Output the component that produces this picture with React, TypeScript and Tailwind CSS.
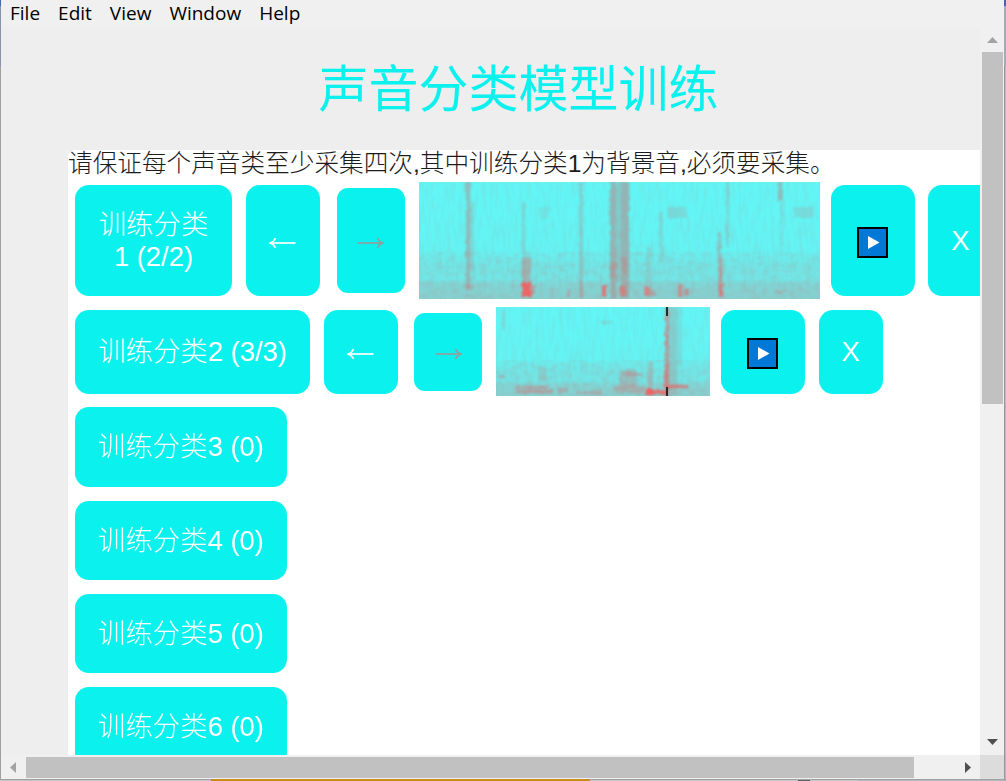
import type { ReactNode } from "react";

type Streak = [x: number, y: number, w: number, h: number, color: string, opacity: number];

const menuItems = ["File", "Edit", "View", "Window", "Help"];

const firstStreaks: Streak[] = [
  [47, 0, 4, 105, "#a79a9a", 0.6],
  [50, 20, 5, 70, "#a79a9a", 0.25],
  [103, 20, 3, 90, "#a79a9a", 0.35],
  [103, 76, 9, 30, "#c08686", 0.5],
  [160, 0, 4, 117, "#a79a9a", 0.4],
  [191, 0, 6, 117, "#a79a9a", 0.7],
  [197, 0, 5, 100, "#a79a9a", 0.45],
  [202, 0, 8, 117, "#a79a9a", 0.7],
  [192, 80, 5, 15, "#c08686", 0.5],
  [203, 75, 5, 17, "#c08686", 0.5],
  [227, 65, 5, 50, "#a79a9a", 0.25],
  [240, 30, 4, 50, "#a79a9a", 0.3],
  [248, 25, 20, 11, "#a79a9a", 0.28],
  [120, 25, 10, 12, "#a79a9a", 0.18],
  [299, 50, 3, 65, "#b09090", 0.5],
  [300, 76, 4, 40, "#d07878", 0.45],
  [307, 0, 3, 65, "#a79a9a", 0.3],
  [359, 0, 5, 19, "#a79a9a", 0.6],
  [361, 19, 3, 45, "#a79a9a", 0.2],
  [375, 25, 19, 11, "#a79a9a", 0.28],
  [103, 101, 9, 14, "#f06060", 0.95],
  [111, 103, 5, 10, "#e07070", 0.55],
  [48, 103, 6, 5, "#d07878", 0.4],
  [148, 108, 3, 8, "#d07878", 0.4],
  [161, 98, 3, 18, "#d07878", 0.4],
  [183, 104, 5, 10, "#f06060", 0.8],
  [200, 104, 7, 10, "#e07070", 0.65],
  [225, 105, 6, 9, "#e87070", 0.7],
  [231, 108, 5, 6, "#d07878", 0.5],
  [259, 103, 5, 12, "#e07070", 0.65],
  [265, 106, 5, 8, "#d07878", 0.6],
  [300, 102, 4, 12, "#f06060", 0.5],
  [355, 108, 10, 3, "#d07878", 0.3],
];

const secondStreaks: Streak[] = [
  [169, 0, 4, 89, "#c08686", 0.7],
  [173, 0, 8, 89, "#a79a9a", 0.4],
  [181, 0, 5, 60, "#a79a9a", 0.2],
  [6, 3, 3, 20, "#a79a9a", 0.25],
  [105, 14, 12, 3, "#a79a9a", 0.3],
  [42, 60, 8, 14, "#c08686", 0.25],
  [2, 68, 7, 3, "#d07878", 0.4],
  [123, 63, 17, 17, "#c08686", 0.4],
  [127, 66, 20, 3, "#d07878", 0.4],
  [152, 54, 5, 35, "#c08686", 0.4],
  [169, 28, 3, 10, "#f06060", 0.4],
  [168, 57, 4, 24, "#f06060", 0.4],
  [20, 79, 32, 3, "#d07878", 0.5],
  [22, 83, 35, 3, "#d07878", 0.5],
  [62, 80, 10, 5, "#d07878", 0.35],
  [80, 84, 27, 3, "#d07878", 0.35],
  [119, 79, 30, 7, "#d07878", 0.35],
  [150, 81, 7, 7, "#f06060", 0.95],
  [157, 83, 14, 5, "#f06060", 0.8],
  [171, 78, 22, 3, "#f06060", 0.7],
];

function Spectrogram({ id, width, height, streaks, marker, className }: {
  id: string;
  width: number;
  height: number;
  streaks: Streak[];
  marker?: number;
  className: string;
}) {
  return (
    <svg className={`block shrink-0 ${className}`} width={width} height={height} viewBox={`0 0 ${width} ${height}`}>
      <defs>
        <linearGradient id={`${id}-base`} x1="0" y1="0" x2="0" y2="1">
          <stop offset="0" stopColor="#62f6f6" />
          <stop offset="0.57" stopColor="#65f3f3" />
          <stop offset="0.72" stopColor="#71e6e6" />
          <stop offset="0.83" stopColor="#71e7e7" />
          <stop offset="0.87" stopColor="#7fd7d7" />
          <stop offset="1" stopColor="#87d0d0" />
        </linearGradient>
        <filter id={`${id}-columns`} x="0" y="0" width="1" height="1" colorInterpolationFilters="sRGB">
          <feTurbulence type="fractalNoise" baseFrequency="0.25 0.05" numOctaves="3" seed="7" />
          <feColorMatrix values="0 0 0 0 .62  0 0 0 0 .65  0 0 0 0 .65  0.9 0 0 0 -.36" />
        </filter>
        <filter id={`${id}-grain`} x="0" y="0" width="1" height="1" colorInterpolationFilters="sRGB">
          <feTurbulence type="fractalNoise" baseFrequency="0.13 0.16" numOctaves="2" seed="12" />
          <feColorMatrix values="0 0 0 0 .72  0 0 0 0 .55  0 0 0 0 .55  1 0 0 0 -.4" />
        </filter>
        <filter id={`${id}-soft`} x="-0.05" y="-0.05" width="1.1" height="1.1" colorInterpolationFilters="sRGB">
          <feTurbulence type="fractalNoise" baseFrequency="0.2" numOctaves="2" seed="4" result="n" />
          <feDisplacementMap in="SourceGraphic" in2="n" scale="4" xChannelSelector="R" yChannelSelector="G" result="d" />
          <feGaussianBlur in="d" stdDeviation="1 1.2" />
        </filter>
      </defs>
      <rect width={width} height={height} fill={`url(#${id}-base)`} />
      <rect width={width} height={height} filter={`url(#${id}-columns)`} opacity="0.4" />
      <rect y={height * 0.6} width={width} height={height * 0.4} filter={`url(#${id}-grain)`} opacity="0.4" />
      <g filter={`url(#${id}-soft)`}>
        {streaks.map(([x, y, w, h, color, opacity], i) => (
          <rect key={i} x={x} y={y} width={w} height={h} fill={color} opacity={opacity} />
        ))}
      </g>
      {marker !== undefined && (
        <path d={`M${marker} 0v9M${marker} ${height - 9}v9`} stroke="#20292b" strokeWidth="2" />
      )}
    </svg>
  );
}

function Tile({ className, children }: { className: string; children: ReactNode }) {
  return (
    <button className={`flex shrink-0 items-center justify-center bg-[#0af1ee] text-white ${className}`}>
      {children}
    </button>
  );
}

function Arrow({ left, className }: { left?: boolean; className: string }) {
  return (
    <svg className={className} width="27" height="12" viewBox="0 0 27 12" fill="none" stroke="currentColor">
      <g transform={left ? undefined : "translate(27 0) scale(-1 1)"}>
        <path d="M2 6H26.5" strokeWidth="1.7" />
        <path d="M6.5 1Q5 4.8 1 6Q5 7.2 6.5 11" strokeWidth="1.6" />
      </g>
    </svg>
  );
}

function PlayIcon({ className }: { className: string }) {
  return (
    <svg className={className} width="31" height="31" viewBox="0 0 31 31">
      <rect x="1" y="1" width="29" height="29" fill="#0078d7" stroke="#000" strokeWidth="2" />
      <path d="M11 9V22L22.5 15.5Z" fill="#fff" />
    </svg>
  );
}

export default function App() {
  return (
    <div className="flex h-[781px] w-[1006px] flex-col overflow-hidden bg-[#c4c4c4] font-['Liberation_Sans','Noto_Sans_CJK_SC',sans-serif]">
      <div className="flex h-[779px] shrink-0">
        <div className="flex w-px flex-col">
          <div className="h-1.5 bg-[#3c69b0]" />
          <div className="h-[60px] bg-[#8793aa]" />
          <div className="flex-1 bg-[#a0a0a0]" />
        </div>
        <div className="flex w-[1003px] shrink-0 flex-col">
          <nav className="flex h-[27px] shrink-0 items-center gap-[18px] bg-[#f0f0f0] pl-[9px] font-['Open_Sans','Noto_Sans',sans-serif] text-[19px] leading-[27px] text-black">
            {menuItems.map((item) => <span key={item}>{item}</span>)}
          </nav>
          <div className="flex h-[728px] shrink-0">
            <main className="flex w-[979px] flex-col overflow-hidden bg-[#eeeeee]">
              <h1 className="h-[123px] w-[1035px] shrink-0 pt-[29px] text-center text-[50px] leading-[68px] whitespace-nowrap text-[#0af1ee]">
                声音分类模型训练
              </h1>
              <section className="ml-[67px] flex w-[1000px] grow flex-col rounded-tl-[7px] bg-white pl-[7px] text-[27.4px] leading-8 font-light">
                <p className="-ml-[7px] h-8 shrink-0 text-[24.65px] leading-[28px] whitespace-nowrap text-[#1c1c1c]">
                  请保证每个声音类至少采集四次,其中训练分类1为背景音,必须要采集。
                </p>
                <div className="flex h-[117px] shrink-0 items-center">
                  <Tile className="h-[111px] w-[157px] rounded-[14px]">
                    <span className="w-28 text-center">训练分类 <br />1 (2/2)</span>
                  </Tile>
                  <Tile className="ml-3.5 h-[111px] w-[74px] rounded-[14px]"><Arrow left className="mt-[5px] mr-px" /></Tile>
                  <Tile className="ml-[17px] h-[105px] w-[68px] rounded-[11px]"><Arrow className="mt-[5px] mr-0.5 text-[#929f9f]" /></Tile>
                  <Spectrogram id="first" width={401} height={117} streaks={firstStreaks} className="ml-3.5" />
                  <Tile className="ml-[11px] h-[111px] w-[84px] rounded-[14px]"><PlayIcon className="mt-[3px] mr-px" /></Tile>
                  <Tile className="ml-[13px] h-[111px] w-[65px] rounded-[14px]">X</Tile>
                </div>
                <div className="mt-2 flex h-[89px] shrink-0 items-center">
                  <Tile className="h-[84px] w-[235px] rounded-[14px] whitespace-nowrap">训练分类2 (3/3)</Tile>
                  <Tile className="ml-3.5 h-[84px] w-[74px] rounded-[14px]"><Arrow left className="mt-[5px] mr-px" /></Tile>
                  <Tile className="ml-4 h-[78px] w-[68px] rounded-[11px]"><Arrow className="mt-[5px] text-[#929f9f]" /></Tile>
                  <Spectrogram id="second" width={214} height={89} streaks={secondStreaks} marker={171} className="ml-3.5" />
                  <Tile className="ml-[11px] h-[84px] w-[84px] rounded-[14px]"><PlayIcon className="mt-[3px] mr-px" /></Tile>
                  <Tile className="ml-3.5 h-[84px] w-16 rounded-[14px]">X</Tile>
                </div>
                <div className="mt-[11px] flex flex-col gap-3.5">
                  {[3, 4, 5, 6].map((n) => (
                    <Tile key={n} className={`w-[212px] rounded-[14px] whitespace-nowrap ${n === 3 ? "h-20" : "h-[79px]"}`}>
                      训练分类{n} (0)
                    </Tile>
                  ))}
                </div>
              </section>
            </main>
            <div className="flex w-6 flex-col items-center bg-[#f0f0f0]">
              <svg className="mt-2.5 h-1.5 w-[11px] shrink-0" viewBox="0 0 11 6"><path d="M0 6L5.5 0L11 6Z" fill="#a3a3a3" /></svg>
              <div className="mt-[9px] ml-px h-[352px] w-[21px] shrink-0 bg-[#c1c1c1]" />
              <svg className="mt-auto mb-[10px] h-1.5 w-[11px] shrink-0" viewBox="0 0 11 6"><path d="M0 0L5.5 6L11 0Z" fill="#505050" /></svg>
            </div>
          </div>
          <div className="flex h-6 items-center bg-[#f0f0f0]">
            <svg className="ml-[9px] h-[11px] w-1.5 shrink-0" viewBox="0 0 6 11"><path d="M6 0L0 5.5L6 11Z" fill="#a3a3a3" /></svg>
            <div className="mt-px ml-2.5 h-[21px] w-[888px] shrink-0 bg-[#c1c1c1]" />
            <svg className="ml-[51px] h-[11px] w-1.5 shrink-0" viewBox="0 0 6 11"><path d="M0 0L6 5.5L0 11Z" fill="#505050" /></svg>
            <div className="ml-auto h-6 w-6 bg-[#dcdcdc]" />
          </div>
        </div>
        <div className="flex w-0.5 flex-col">
          <div className="h-1.5 bg-[#3c69b0]" />
          <div className="h-[60px] bg-[#9eabc0]" />
          <div className="flex-1 border-l border-[#92979d] bg-[#b5bbc5]" />
        </div>
      </div>
      <div className="flex h-0.5 shrink-0 border-t border-[#a0a0a0] bg-[#c4c4c4]">
        <div className="ml-[211px] -mt-px h-0.5 w-[379px] bg-[#c98a1a]" />
        <div className="ml-[208px] h-px w-3 bg-[#62626e]" />
        <div className="ml-12 h-px flex-1 bg-[#b1b9c8]" />
      </div>
    </div>
  );
}
